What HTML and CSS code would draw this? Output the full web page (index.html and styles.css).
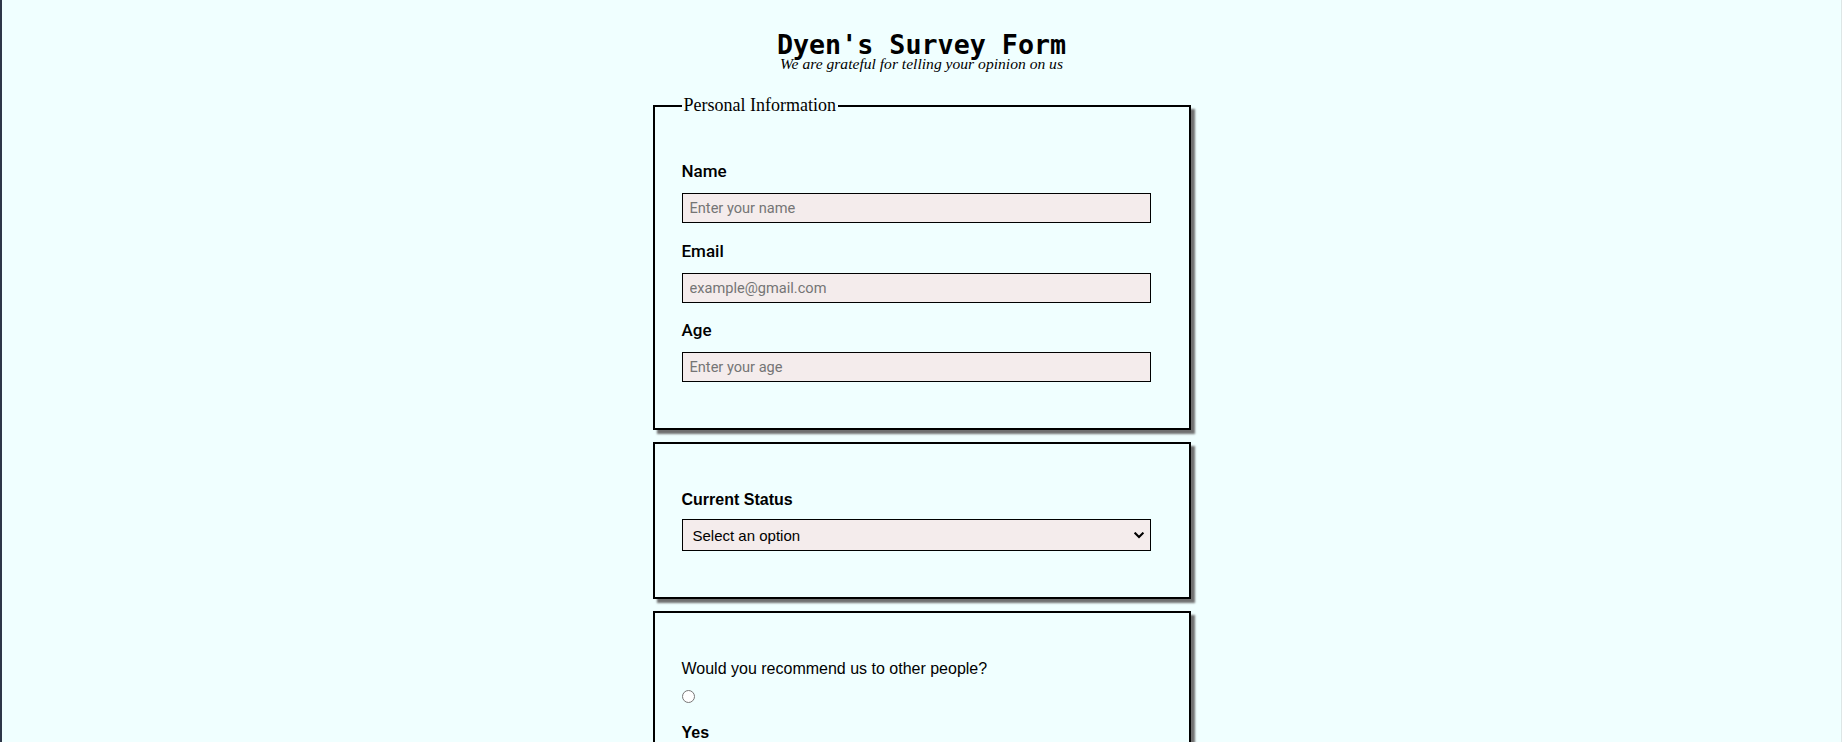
FILE: index.html
```html
<!DOCTYPE html>
<html lang="en">
<head>
<meta charset="utf-8">
<title>Dyen's Survey Form</title>
<link rel="stylesheet" href="styles.css">
</head>
<body class="page">
<header class="header">
  <h1 class="title" id="title">Dyen's Survey Form</h1>
  <p class="description" id="description">We are grateful for telling your opinion on us</p>
</header>
<form class="survey" id="survey-form">
  <fieldset class="card card-first">
    <legend class="card-legend">Personal Information</legend>
    <div class="field">
      <label class="label-f" for="name" id="name-label">Name</label>
      <input class="text-input" id="name" type="text" placeholder="Enter your name">
    </div>
    <div class="field">
      <label class="label-f" for="email" id="email-label">Email</label>
      <input class="text-input" id="email" type="email" placeholder="example@gmail.com">
    </div>
    <div class="field">
      <label class="label-f" for="number" id="number-label">Age</label>
      <input class="text-input" id="number" type="number" placeholder="Enter your age">
    </div>
  </fieldset>
  <fieldset class="card">
    <div class="field field-select">
      <label class="label-a" for="dropdown">Current Status</label>
      <div class="select-wrap">
        <select class="select-input" id="dropdown">
          <option>Select an option</option>
          <option>Student</option>
          <option>Full Time Job</option>
          <option>Prefer not to say</option>
        </select>
        <svg class="select-arrow" width="10" height="7" viewBox="0 0 10 7" aria-hidden="true">
          <path d="M1.3 1.3 L5 5 L8.7 1.3" fill="none" stroke="#000" stroke-width="2" stroke-linecap="square"/>
        </svg>
      </div>
    </div>
  </fieldset>
  <fieldset class="card">
    <p class="question">Would you recommend us to other people?</p>
    <input class="radio" type="radio" id="yes" name="recommend" value="yes">
    <label class="label-yes" for="yes">Yes</label>
    <input class="radio" type="radio" id="no" name="recommend" value="no">
    <label class="label-yes" for="no">No</label>
  </fieldset>
</form>
</body>
</html>
```
FILE: styles.css
```css
html {
  margin: 0;
  padding: 0;
  background: #f0ffff;
}

.page {
  margin: 0;
  min-height: 100vh;
  box-sizing: border-box;
  border-left: 2px solid #2e3648;
  border-right: 1px solid #dde6e6;
  background: #f0ffff;
  color: #000;
  font-family: "Liberation Serif", serif;
}

.header {
  padding-top: 34px;
  text-align: center;
}

.title {
  margin: 0;
  font-family: "DejaVu Sans Mono", monospace;
  font-weight: bold;
  font-size: 26.7px;
  line-height: 22px;
}

.description {
  margin: 0;
  font-family: "Liberation Serif", serif;
  font-style: italic;
  font-size: 15.6px;
  line-height: 15px;
}

.survey {
  margin-top: 24px;
  padding-bottom: 40px;
}

.card {
  box-sizing: border-box;
  width: 538px;
  margin: 0 auto 12px;
  padding: 47px 38px 46px 27px;
  border: 2px solid #000;
  box-shadow: 4px 4px 2px #707070;
  background: #f0ffff;
  min-inline-size: 0;
}

.card-first {
  padding-top: 45px;
}

.card-legend {
  padding: 0 2px;
  font-family: "Liberation Serif", serif;
  font-size: 18px;
}

.field {
  margin-bottom: 17.5px;
}

.field:last-child {
  margin-bottom: 0;
}

.label-f {
  display: block;
  margin-bottom: 12px;
  font-family: Roboto, "Liberation Sans", sans-serif;
  font-weight: 500;
  font-size: 17px;
  line-height: 20px;
}

.text-input {
  display: block;
  box-sizing: border-box;
  width: 100%;
  height: 30px;
  margin: 0;
  padding: 0 7px;
  border: 1px solid #000;
  border-radius: 0;
  background: #f4ecec;
  font-family: Roboto, "Liberation Sans", sans-serif;
  font-size: 14.6px;
  color: #000;
  outline: none;
}

.text-input::placeholder {
  color: #757575;
}

.label-a {
  display: block;
  margin-bottom: 10px;
  font-family: "Liberation Sans", Arial, sans-serif;
  font-weight: bold;
  font-size: 16px;
  line-height: 18.4px;
}

.select-wrap {
  position: relative;
}

.select-input {
  display: block;
  box-sizing: border-box;
  width: 100%;
  height: 32px;
  margin: 0;
  padding: 0 30px 0 10px;
  border: 1px solid #000;
  border-radius: 0;
  background-color: #f4ecec;
  font-family: "Liberation Sans", Arial, sans-serif;
  font-size: 15px;
  color: #000;
  appearance: none;
  -webkit-appearance: none;
}

.select-arrow {
  position: absolute;
  right: 7px;
  top: 13px;
  pointer-events: none;
}

.question {
  margin: 0;
  font-family: "Liberation Sans", Arial, sans-serif;
  font-size: 16px;
  line-height: 18.4px;
}

.radio {
  display: block;
  width: 13px;
  height: 13px;
  margin: 11px 0 21px 0;
}

.label-yes {
  display: block;
  font-family: "Liberation Sans", Arial, sans-serif;
  font-weight: bold;
  font-size: 16px;
  line-height: 18.4px;
}
```
